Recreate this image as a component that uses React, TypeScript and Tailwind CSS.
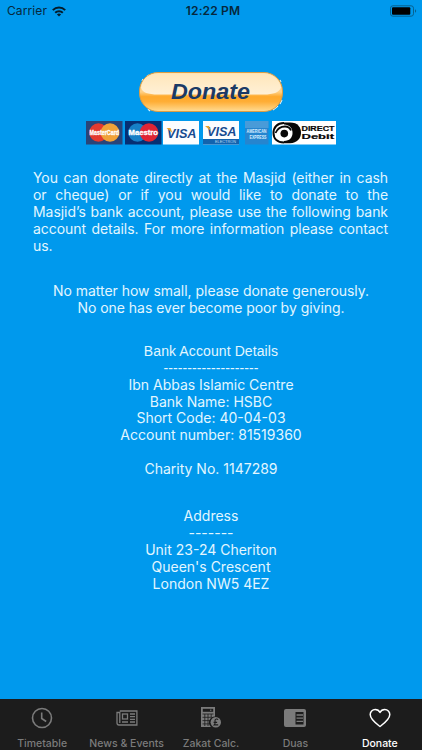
import type { ReactNode } from "react";

const intro = [
  "You can donate directly at the Masjid (either in cash",
  "or cheque) or if you would like to donate to the",
  "Masjid’s bank account, please use the following bank",
  "account details. For more information please contact",
];

function StatusBar() {
  return (
    <div className="grid h-[22px] grid-cols-3 items-center pl-[7px] pr-[5px] text-[#06283c]">
      <div className="flex items-center gap-[5px]">
        <span className="text-[12px] tracking-[0.1px]">Carrier</span>
        <svg width="14" height="11" viewBox="0 0 14 11" fill="none" stroke="#041c2b" strokeWidth="2">
          <path d="M0.8 4.1a8.8 8.8 0 0 1 12.4 0" />
          <path d="M3.2 6.7a5.4 5.4 0 0 1 7.6 0" />
          <path d="M7 10.6L4.9 8.5a3 3 0 0 1 4.2 0z" fill="#041c2b" stroke="none" />
        </svg>
      </div>
      <span className="whitespace-nowrap pl-[2px] text-center text-[12px] font-semibold tracking-[0.15px]">12:22 PM</span>
      <svg className="justify-self-end" width="27" height="12" viewBox="0 0 27 12">
        <rect x="0.5" y="0.8" width="23" height="10.4" rx="2.4" fill="none" stroke="#07618f" />
        <rect x="2" y="2.3" width="18.3" height="7.4" rx="1" fill="#000" />
        <path d="M25 4.2c1.6.6 1.6 3 0 3.6z" fill="#07618f" />
      </svg>
    </div>
  );
}

function DonateButton() {
  return (
    <svg className="mx-auto block" width="146" height="42" viewBox="0 0 146 42">
      <defs>
        <linearGradient id="gold" x1="0" y1="0" x2="0" y2="1">
          <stop offset="0" stopColor="#ffe0a6" />
          <stop offset="0.5" stopColor="#ffd084" />
          <stop offset="0.62" stopColor="#ffa92b" />
          <stop offset="0.75" stopColor="#ffae36" />
          <stop offset="1" stopColor="#ffdc94" />
        </linearGradient>
        <linearGradient id="shine" x1="0" y1="0" x2="0" y2="1">
          <stop offset="0" stopColor="#ffe6ba" />
          <stop offset="1" stopColor="#fff0d6" />
        </linearGradient>
      </defs>
      <path d="M4 10l1-2M9 5l2-1M143 11l-1-2M144 29l-2 4M140 35l-5 4M10 38l2 2" stroke="#d8f3ff" strokeWidth="1.2" />
      <rect x="1.5" y="1.5" width="143" height="39" rx="18.5" fill="url(#gold)" stroke="#dc9d45" />
      <path d="M20 2.5h106c9 0 16 7 17 14c-2 5-8 7-17 7H20c-10 0-16-2-17-7C4 8 11 2.5 20 2.5z" fill="url(#shine)" />
      <text x="33" y="27.5" textLength="79" lengthAdjust="spacingAndGlyphs" fontFamily="Liberation Sans, sans-serif" fontSize="22.5" fontWeight="700" fontStyle="italic" fill="#1b3a66">
        Donate
      </text>
    </svg>
  );
}

function CircleCard({ name, bg, left, right }: { name: string; bg: string; left: string; right: string }) {
  return (
    <svg width="37" height="24" viewBox="0 0 37 24">
      <rect width="36.5" height="23.5" fill={bg} />
      <circle cx="12.5" cy="11.5" r="9.3" fill={left} />
      <circle cx="24" cy="11.5" r="9.3" fill={right} />
      <text x="3.5" y="14" textLength="29.5" lengthAdjust="spacingAndGlyphs" fontFamily="Liberation Sans, sans-serif" fontSize="6.5" fontWeight="700" fill="#fff" stroke="#fff" strokeWidth="0.3">
        {name}
      </text>
    </svg>
  );
}

function VisaCard({ electron = false }: { electron?: boolean }) {
  return (
    <svg className="overflow-visible" width="37" height="24" viewBox="0 0 37 24">
      <rect width="36" height="23.5" fill="#fbfdff" />
      {electron && <rect y="18" width="36" height="5.5" fill="#1263ae" />}
      <text x="4" y={electron ? 14.5 : 16.5} textLength="29.5" lengthAdjust="spacingAndGlyphs" fontFamily="Liberation Sans, sans-serif" fontSize="13" fontWeight="700" fontStyle="italic" fill="#174b91">
        VISA
      </text>
      <path d={electron ? "M2 5h4l2 5z" : "M3.5 7h4l2 5z"} fill="#e8a32d" />
      {electron && (
        <text x="12" y="22.3" textLength="21" lengthAdjust="spacingAndGlyphs" fontFamily="Liberation Sans, sans-serif" fontSize="4" fill="#b9dcf5">
          ELECTRON
        </text>
      )}
    </svg>
  );
}

function Cards() {
  return (
    <div className="flex h-6 pl-[86px]">
      <CircleCard name="MasterCard" bg="#294478" left="#e33a2f" right="#f0a239" />
      <div className="ml-[2px]">
        <CircleCard name="Maestro" bg="#062f73" left="#167fc6" right="#df2534" />
      </div>
      <div className="ml-[1px]">
        <VisaCard />
      </div>
      <div className="ml-[3px]">
        <VisaCard electron />
      </div>
      <svg className="ml-[5px] overflow-visible" width="24" height="24" viewBox="0 0 24 24">
        <rect width="23.5" height="23.5" fill="#2685cf" />
        <rect width="23.5" height="7" fill="#499bd8" />
        <g fontFamily="Liberation Sans, sans-serif" fontSize="5" fontWeight="700" fill="#d9efff">
          <text x="1.5" y="12" textLength="20" lengthAdjust="spacingAndGlyphs">AMERICAN</text>
          <text x="4.5" y="18" textLength="17" lengthAdjust="spacingAndGlyphs">EXPRESS</text>
        </g>
      </svg>
      <svg className="ml-[3px] overflow-visible" width="65" height="24" viewBox="0 0 65 24">
        <rect width="64" height="23.5" fill="#fff" />
        <path d="M12 1.5h6c8 0 11 5 11 10.3S25 22.3 18 22.3h-6z" fill="#080808" />
        <path d="M12 2C5 2 1.5 6.5 1.5 12S5 21.5 12 21.5" fill="none" stroke="#080808" strokeWidth="2" />
        <path d="M12 3.6c5.5 0 8.5 4 8.5 8.4s-3 8-8.5 8z" fill="#fff" />
        <path d="M3.5 12c2-4.5 5-6.5 9.5-6.5c3 0 5 1.5 6 4" fill="none" stroke="#080808" strokeWidth="1.8" />
        <circle cx="12.3" cy="12.6" r="3.8" fill="#080808" />
        <g fontFamily="Liberation Sans, sans-serif" fontSize="7" fontWeight="700" fill="#080808" stroke="#080808" strokeWidth="0.2">
          <text x="29.5" y="10.3" textLength="33" lengthAdjust="spacingAndGlyphs">DIRECT</text>
          <text x="29.5" y="18.4" textLength="32.5" lengthAdjust="spacingAndGlyphs">Debit</text>
        </g>
      </svg>
    </div>
  );
}

function Tab({ label, active = false, children }: { label: string; active?: boolean; children: ReactNode }) {
  return (
    <div className={`flex flex-1 flex-col items-center ${active ? "text-white" : "text-[#7b7b7b]"}`}>
      <div className="flex h-[37.5px] items-center justify-center">{children}</div>
      <span className="whitespace-nowrap text-[10.5px] font-medium leading-[13px]">{label}</span>
    </div>
  );
}

function TabBar() {
  return (
    <nav className="flex h-[51px] bg-[#1c1c1c]">
      <Tab label="Timetable">
        <svg width="22" height="22" viewBox="0 0 22 22" fill="none" stroke="currentColor" strokeWidth="1.6">
          <circle cx="11" cy="11" r="9.5" />
          <path d="M10.7 5.5v6l4.5 3" />
        </svg>
      </Tab>
      <Tab label="News & Events">
        <svg width="22" height="18" viewBox="0 0 22 18" fill="none" stroke="currentColor" strokeWidth="1.3">
          <path d="M3.8 2h17.1v14H3c-1.4 0-2-.7-2-2V3.5h2.8V14" />
          <rect x="6.5" y="5" width="5" height="5" />
          <path d="M14 5h5M14 7.7h5M14 10.4h5M6 13h6M14 13h5" />
        </svg>
      </Tab>
      <Tab label="Zakat Calc.">
        <svg width="22" height="23" viewBox="0 0 22 23">
          <path d="M1 1h14v9.5a6 6 0 0 0-4 10.5H1z" fill="currentColor" />
          <path d="M2.8 2.8h10.4v3H2.8z" fill="#1c1c1c" />
          <path d="M10.8 3.5v1.5" stroke="currentColor" />
          <path d="M2.5 8h11M2.5 11.3h9.5M2.5 14.6h7.5M2.5 17.9h7M4.8 8v12M8 8v12M11.2 8v3" stroke="#1c1c1c" strokeWidth="0.8" />
          <circle cx="15.8" cy="16.2" r="5.2" fill="currentColor" />
          <path d="M18 13.8c-.7-1.3-3-1-3 .8 0 1.8.7 2.8-.8 4.3h4M13.6 16.4h3.5" fill="none" stroke="#1c1c1c" strokeWidth="1.1" />
        </svg>
      </Tab>
      <Tab label="Duas">
        <svg width="24" height="18" viewBox="0 0 24 18">
          <rect x="1" width="22" height="18" rx="2" fill="currentColor" />
          <path d="M12.5 3h8v12.5h-8z" fill="#1c1c1c" />
          <path d="M13.5 6h6.5M13.5 9.2h6.5M13.5 12.4h6.5" stroke="currentColor" strokeWidth="1.3" />
        </svg>
      </Tab>
      <Tab label="Donate" active>
        <svg width="22" height="20" viewBox="0 0 22 20" fill="none" stroke="currentColor" strokeWidth="1.5" strokeLinejoin="round">
          <path d="M11 18.5C8.5 16.5 1.2 11.5 1.2 6.5A5 5 0 0 1 6.2 1.5C8.5 1.5 10.2 2.8 11 4.5C11.8 2.8 13.5 1.5 15.8 1.5A5 5 0 0 1 20.8 6.5C20.8 11.5 13.5 16.5 11 18.5z" />
        </svg>
      </Tab>
    </nav>
  );
}

export default function App() {
  return (
    <div className="flex h-[750px] w-[422px] flex-col overflow-hidden bg-[#0099ed] font-['Inter','Liberation_Sans',sans-serif]">
      <StatusBar />
      <main className="flex-1 text-[14px] leading-[17px] text-[#e2f6ff]">
        <div className="pt-[49px]">
          <DonateButton />
        </div>
        <div className="pt-2">
          <Cards />
        </div>

        <div className="mt-[24px] pl-[33px] pr-[34px] leading-[17.1px] tracking-[-0.06px]">
          {intro.map((line) => (
            <p key={line} className="whitespace-nowrap [text-align-last:justify]">{line}</p>
          ))}
          <p>us.</p>
        </div>

        <div className="mt-[27.5px] text-center tracking-[-0.03px]">
          <p>No matter how small, please donate generously.</p>
          <p>No one has ever become poor by giving.</p>
        </div>

        {/* Bank details */}
        <div className="mt-[27px] text-center leading-[16.85px]">
          <div className="font-['Liberation_Sans',sans-serif] tracking-[0.1px]">
            <p>Bank Account Details</p>
            <p>--------------------</p>
          </div>
          <p>Ibn Abbas Islamic Centre</p>
          <p>Bank Name: HSBC</p>
          <p>Short Code: 40-04-03</p>
          <p>Account number: 81519360</p>
          <p className="mt-[17px]">Charity No. 1147289</p>
        </div>

        <div className="mt-[29px] text-center">
          <p>Address</p>
          <p>-------</p>
          <p>Unit 23-24 Cheriton</p>
          <p>Queen's Crescent</p>
          <p>London NW5 4EZ</p>
        </div>
      </main>
      <TabBar />
    </div>
  );
}
